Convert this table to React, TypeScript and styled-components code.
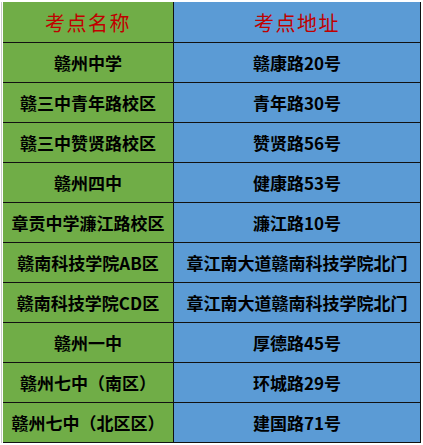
import { Fragment } from 'react'
import styled, { createGlobalStyle } from 'styled-components'

const GlobalStyle = createGlobalStyle`
  html, body {
    margin: 0;
    padding: 0;
    background: #ffffff;
  }
`

const Sheet = styled.div`
  padding: 2px 0 0 1px;
  width: 423px;
  height: 445px;
  box-sizing: border-box;
`

const Table = styled.div`
  display: grid;
  grid-template-columns: 171px 247px;
  border-left: 1px solid #c8c8c8;
  padding-left: 1px;
  width: fit-content;
`

const Cell = styled.div<{ $blue?: boolean; $head?: boolean }>`
  height: ${p => (p.$head ? '40px' : '39px')};
  display: flex;
  align-items: center;
  justify-content: center;
  background: ${p => (p.$blue ? '#5b9bd5' : '#70ad47')};
  border-right: 1px solid #111;
  border-bottom: 1px solid #111;
  font-family: "Noto Sans CJK SC", "Liberation Sans", sans-serif;
  font-size: ${p => (p.$head ? '20px' : '17px')};
  font-weight: ${p => (p.$head ? 400 : 700)};
  color: ${p => (p.$head ? '#c00000' : '#000')};
  letter-spacing: ${p => (p.$head ? '1.5px' : '0')};
  white-space: nowrap;
`

const rows: [string, string][] = [
  ['赣州中学', '赣康路20号'],
  ['赣三中青年路校区', '青年路30号'],
  ['赣三中赞贤路校区', '赞贤路56号'],
  ['赣州四中', '健康路53号'],
  ['章贡中学濂江路校区', '濂江路10号'],
  ['赣南科技学院AB区', '章江南大道赣南科技学院北门'],
  ['赣南科技学院CD区', '章江南大道赣南科技学院北门'],
  ['赣州一中', '厚德路45号'],
  ['赣州七中（南区）', '环城路29号'],
  ['赣州七中（北区区）', '建国路71号'],
]

function App() {
  return (
    <Sheet>
      <GlobalStyle />
      <Table>
        <Cell $head>考点名称</Cell>
        <Cell $head $blue>考点地址</Cell>
        {rows.map(([name, addr]) => (
          <Fragment key={name}>
            <Cell>{name}</Cell>
            <Cell $blue>{addr}</Cell>
          </Fragment>
        ))}
      </Table>
    </Sheet>
  )
}

export default App
